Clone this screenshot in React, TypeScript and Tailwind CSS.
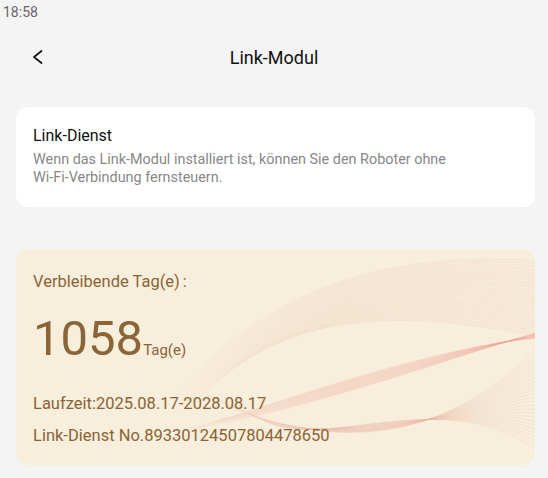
const fanA = Array.from({ length: 32 }, (_, i) => i);
const fanB = Array.from({ length: 14 }, (_, i) => i);
const fanC = Array.from({ length: 26 }, (_, i) => i);

function Waves() {
  return (
    <svg
      aria-hidden="true"
      className="pointer-events-none absolute inset-0 h-full w-full"
      viewBox="0 0 519 216"
      preserveAspectRatio="none"
    >
      <defs>
        <linearGradient id="fade" x1="0" y1="0" x2="1" y2="0">
          <stop offset="0.3" stopColor="#fff" stopOpacity="0" />
          <stop offset="0.62" stopColor="#fff" stopOpacity="1" />
        </linearGradient>
        <mask id="waveMask">
          <rect width="519" height="216" fill="url(#fade)" />
        </mask>
      </defs>
      <g mask="url(#waveMask)">
        {fanA.map((i) => (
          <path
            key={`a${i}`}
            d={`M ${120 + i * 3} ${200 - i * 2.5} C ${240 + i * 2} ${8 + i * 1.5}, ${420} ${6 + i * 2}, 519 ${12 + i * 2.4}`}
            fill="none"
            stroke="#ebb6a6"
            strokeOpacity={0.22}
            strokeWidth={1}
          />
        ))}
        {fanB.map((i) => (
          <path
            key={`b${i}`}
            d={`M ${150 + i * 4} ${185 - i} C ${300} ${160 - i * 1.5}, ${430} ${110 - i}, 519 ${84 + i * 0.4}`}
            fill="none"
            stroke="#f09a90"
            strokeOpacity={0.2 + (i % 3) * 0.05}
            strokeWidth={1}
          />
        ))}
        {fanC.map((i) => (
          <path
            key={`c${i}`}
            d={`M ${190 + i * 2} ${145 + i * 0.8} C ${290} ${200 + i * 0.5}, ${420} ${205 - i * 3}, 519 ${100 + i * 4}`}
            fill="none"
            stroke="#ebb6a6"
            strokeOpacity={0.2}
            strokeWidth={1}
          />
        ))}
      </g>
    </svg>
  );
}

export default function App() {
  return (
    <div className="h-[478px] w-[548px] overflow-hidden bg-[#f4f4f4] font-['Roboto',sans-serif]">
      <div className="h-[22px] pl-[3px] pt-[4px] text-[14px] leading-[16px] text-[#666]">18:58</div>

      <header className="relative flex h-[70px] items-center justify-center">
        <svg
          aria-hidden="true"
          className="absolute left-[32px] top-[28px]"
          width="12"
          height="14"
          viewBox="0 0 12 14"
        >
          <path d="M9.5 1 L2 7 L9.5 13" fill="none" stroke="#111" strokeWidth="1.7" strokeLinecap="round" strokeLinejoin="round" />
        </svg>
        <h1 className="text-[18px] text-[#111]">Link-Modul</h1>
      </header>

      <section className="ml-4 mt-[15px] h-[100px] w-[519px] rounded-xl bg-white px-[17px] pt-[18px]">
        <h2 className="text-[16px] leading-[22px] text-[#111]">Link-Dienst</h2>
        <p className="mt-[4px] text-[14.4px] leading-[18px] text-[#888]">
          Wenn das Link-Modul installiert ist, können Sie den Roboter ohne
          <br />
          Wi-Fi-Verbindung fernsteuern.
        </p>
      </section>

      <section className="relative ml-4 mt-[42px] h-[216px] w-[519px] overflow-hidden rounded-xl bg-[#f7eedb] px-[17px] pt-[22px] text-[#8b6437]">
        <Waves />
        <div className="relative">
          <p className="text-[16.5px] leading-[22px]">
            Verbleibende Tag(e)<span className="ml-[3px]">:</span>
          </p>
          <div className="mt-[18px] flex items-baseline">
            <span className="text-[49px] leading-[56px]">1058</span>
            <span className="text-[15px]">Tag(e)</span>
          </div>
          <p className="mt-[26px] text-[16.5px] leading-[22px]">Laufzeit:2025.08.17-2028.08.17</p>
          <p className="mt-[10px] text-[16.5px] leading-[22px]">Link-Dienst No.89330124507804478650</p>
        </div>
      </section>
    </div>
  );
}
